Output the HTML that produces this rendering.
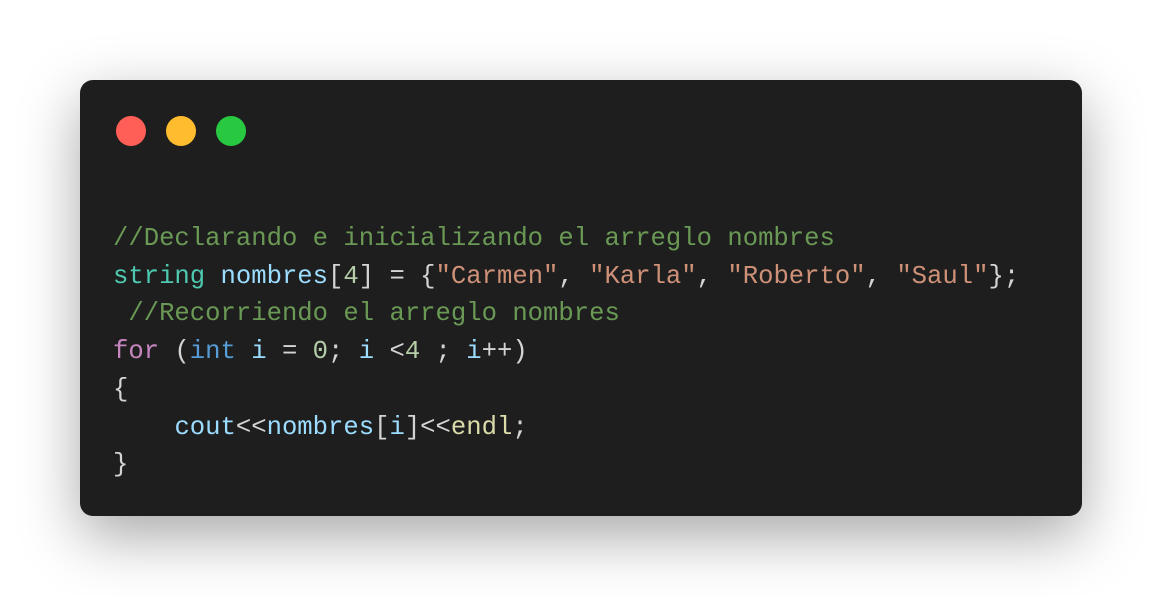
<!DOCTYPE html>
<html><head><style>
html,body{margin:0;padding:0;background:#fff;width:1162px;height:596px;overflow:hidden}
.card{position:absolute;left:80px;top:80px;width:1002px;height:436px;background:#1e1e1e;border-radius:13px;box-shadow:0 20px 60px rgba(0,0,0,0.35)}
.dot{position:absolute;top:36px;width:30px;height:30px;border-radius:50%}
pre{position:absolute;left:33px;top:140px;margin:0;font-family:"Liberation Mono",monospace;font-size:25.6px;line-height:37.7px;color:#d4d4d4}
.c{color:#6a9955}.t{color:#4ec9b0}.v{color:#9cdcfe}.s{color:#ce9178}.n{color:#b5cea8}.k{color:#c586c0}.b{color:#569cd6}.f{color:#dcdcaa}
</style></head><body>
<div class="card">
<div class="dot" style="left:36px;background:#ff5f57"></div>
<div class="dot" style="left:86px;background:#febc2e"></div>
<div class="dot" style="left:136px;background:#28c840"></div>
<pre><span class="c">//Declarando e inicializando el arreglo nombres</span>
<span class="t">string</span> <span class="v">nombres</span>[<span class="n">4</span>] = {<span class="s">"Carmen"</span>, <span class="s">"Karla"</span>, <span class="s">"Roberto"</span>, <span class="s">"Saul"</span>};
 <span class="c">//Recorriendo el arreglo nombres</span>
<span class="k">for</span> (<span class="b">int</span> <span class="v">i</span> = <span class="n">0</span>; <span class="v">i</span> &lt;<span class="n">4</span> ; <span class="v">i</span>++)
{
    <span class="v">cout</span>&lt;&lt;<span class="v">nombres</span>[<span class="v">i</span>]&lt;&lt;<span class="f">endl</span>;
}</pre>
</div>
</body></html>
